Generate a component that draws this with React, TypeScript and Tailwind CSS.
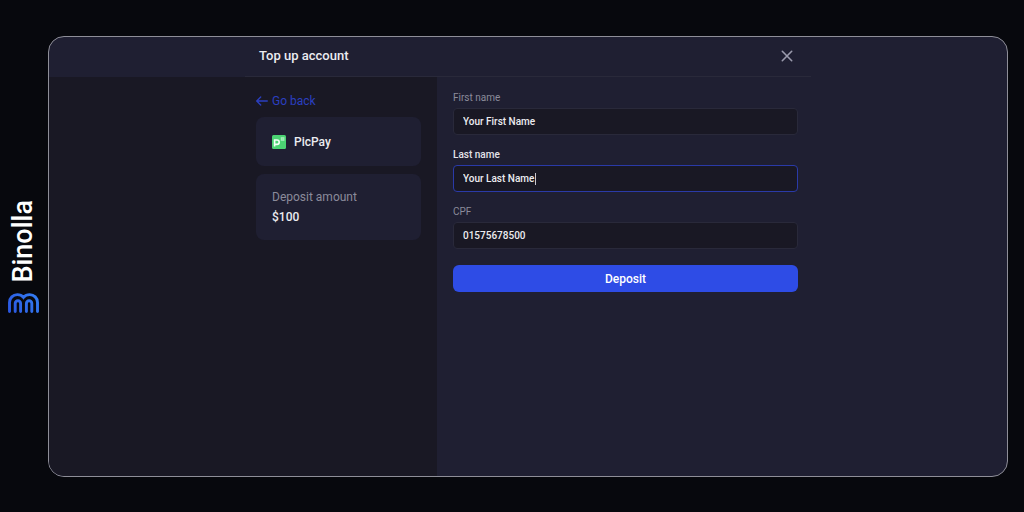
import { useState } from "react";

interface TextFieldProps {
  id: string;
  label: string;
  value: string;
  onChange: (value: string) => void;
  active?: boolean;
}

function TextField({ id, label, value, onChange, active }: TextFieldProps) {
  return (
    <div className="flex flex-col gap-0.5">
      <label
        htmlFor={id}
        className={`text-[10px] leading-4 ${active ? "font-medium text-[#e4e4ea]" : "text-[#8b8b9b]"}`}
      >
        {label}
      </label>
      <div className="relative">
        <input
          id={id}
          type="text"
          value={value}
          autoFocus={active}
          onChange={(e) => onChange(e.target.value)}
          className={`block h-[27px] w-full rounded border bg-[#191824] px-[9px] text-[10px] font-medium text-[#ececf0] caret-transparent outline-none ${
            active ? "border-[#2a3aa8]" : "border-[#29293a]"
          }`}
        />
        {active && (
          <span className="pointer-events-none absolute top-2 left-[82px] h-3 w-px bg-[#c8c8d0]" aria-hidden="true" />
        )}
      </div>
    </div>
  );
}

function BinollaLogo() {
  return (
    <svg width="31" height="20" viewBox="0 0 31 20" fill="none" aria-hidden="true">
      <defs>
        <linearGradient id="logo-blue" x1="0" y1="20" x2="31" y2="0" gradientUnits="userSpaceOnUse">
          <stop stopColor="#2a55e0" />
          <stop offset="1" stopColor="#3480f4" />
        </linearGradient>
      </defs>
      <g stroke="url(#logo-blue)" strokeWidth="2.9" strokeLinecap="round">
        <path d="M1.5 18.5V9.5C1.5 5 5 1.6 9.3 1.6c2.5 0 4.7 1 6.2 2.8 1.5-1.8 3.7-2.8 6.2-2.8 4.3 0 7.8 3.4 7.8 7.9v9" />
        <path d="M7.2 18.5v-8a2.7 2.7 0 0 1 5.4 0v8" />
        <path d="M18.4 18.5v-8a2.7 2.7 0 0 1 5.4 0v8" />
      </g>
    </svg>
  );
}

function PicPayIcon() {
  return (
    <svg width="14" height="14" viewBox="0 0 14 14" aria-hidden="true">
      <rect width="14" height="14" rx="1.5" fill="#4bd373" />
      <path d="M2.6 11.4V5H5a2.2 2.2 0 0 1 0 4.4H2.6" fill="none" stroke="#f4fff7" strokeWidth="1.6" />
      <rect x="8.8" y="2.2" width="3.6" height="3.6" fill="#a9ecbe" />
      <rect x="9.8" y="3.2" width="1.6" height="1.6" fill="#8fe6a9" />
    </svg>
  );
}

export default function App() {
  const [firstName, setFirstName] = useState("Your First Name");
  const [lastName, setLastName] = useState("Your Last Name");
  const [cpf, setCpf] = useState("01575678500");

  return (
    <div className="flex min-h-screen bg-[#07080d] pt-9 pr-4 pb-[35px] font-[Roboto,sans-serif] text-[#ececf0]">
      <div className="flex w-12 shrink-0 flex-col items-center justify-center gap-2.5 pr-0.5">
        <span className="rotate-180 text-[27px] leading-8 font-medium text-white [writing-mode:vertical-rl]">
          Binolla
        </span>
        <BinollaLogo />
      </div>

      <main className="flex flex-1 flex-col overflow-hidden rounded-2xl border border-[#8e8e98] bg-[#1f1f32]">
        <header className="flex justify-center">
          <div className="flex h-10 w-[566px] items-center justify-between border-b border-[#29293a] pr-[18px] pb-0.5 pl-3.5">
            <h1 className="text-[13px] font-medium">Top up account</h1>
            <button type="button" aria-label="Close" className="text-[#9b9bad]">
              <svg width="12" height="12" viewBox="0 0 12 12" fill="none" stroke="currentColor" strokeWidth="1.6" strokeLinecap="round">
                <path d="M1.3 1.3l9.4 9.4M10.7 1.3l-9.4 9.4" />
              </svg>
            </button>
          </div>
        </header>

        <div className="grid flex-1 grid-cols-[1fr_192px_374px_1fr]">
          <aside className="col-span-2 flex justify-end bg-[#191824] pt-4 pr-4">
            <div className="flex w-[165px] flex-col">
              <a href="#" className="flex items-center gap-1 text-[12px] leading-4 text-[#2b3fc0]">
                <svg width="12" height="10" viewBox="0 0 12 10" fill="none" stroke="currentColor" strokeWidth="1.3" strokeLinecap="round" strokeLinejoin="round">
                  <path d="M11.3 5H.8M4.7 1L.7 5l4 4" />
                </svg>
                Go back
              </a>
              <div className="mt-2 flex h-[49px] items-center gap-2 rounded-lg bg-[#1f1f32] px-4">
                <PicPayIcon />
                <span className="text-[12px] font-medium">PicPay</span>
              </div>
              <div className="mt-2 rounded-lg bg-[#1f1f32] px-4 py-[13px]">
                <p className="text-[12px] leading-5 text-[#8b8b9b]">Deposit amount</p>
                <p className="text-[12px] leading-5 font-medium">$100</p>
              </div>
            </div>
          </aside>

          <form
            className="flex flex-col gap-3 pt-[13px] pr-[13px] pl-4"
            onSubmit={(e) => e.preventDefault()}
          >
            <TextField id="first-name" label="First name" value={firstName} onChange={setFirstName} />
            <TextField id="last-name" label="Last name" value={lastName} onChange={setLastName} active />
            <TextField id="cpf" label="CPF" value={cpf} onChange={setCpf} />
            <button
              type="submit"
              className="mt-1 h-[27px] rounded-md bg-[#2e4ce6] text-[12px] font-medium text-white"
            >
              Deposit
            </button>
          </form>
        </div>
      </main>
    </div>
  );
}
